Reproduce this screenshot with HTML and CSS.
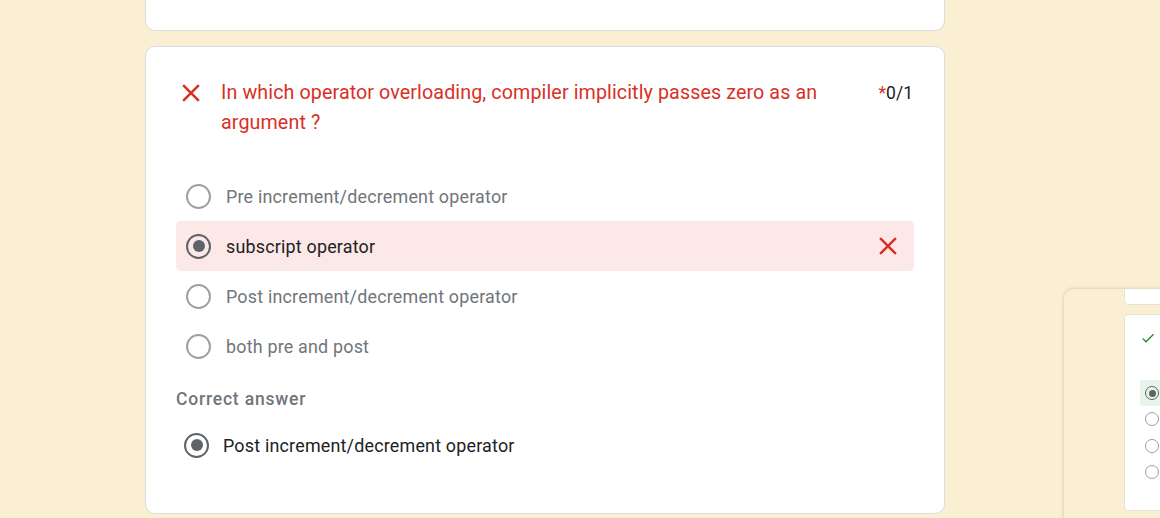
FILE: index.html
```html
<!DOCTYPE html>
<html lang="en">
<head>
<meta charset="utf-8">
<title>Quiz response</title>
<link rel="stylesheet" href="styles.css">
</head>
<body>
<div class="page">
  <div class="column">
    <div class="card card-prev"></div>
    <div class="card question">
      <div class="q-head">
        <span class="q-icon">
          <svg viewBox="0 0 24 24" width="30" height="30"><path d="M19 6.41L17.59 5 12 10.59 6.41 5 5 6.41 10.59 12 5 17.59 6.41 19 12 13.41 17.59 19 19 17.59 13.41 12z" fill="#d93025"/></svg>
        </span>
        <div class="q-title">In which operator overloading, compiler implicitly passes zero as an argument ?</div>
        <div class="q-points"><span class="req">*</span>0/1</div>
      </div>
      <div class="options">
        <div class="opt"><span class="radio"></span><span class="opt-text">Pre increment/decrement operator</span></div>
        <div class="opt opt-wrong"><span class="radio checked"></span><span class="opt-text">subscript operator</span>
          <span class="opt-mark"><svg viewBox="0 0 24 24" width="30" height="30"><path d="M19 6.41L17.59 5 12 10.59 6.41 5 5 6.41 10.59 12 5 17.59 6.41 19 12 13.41 17.59 19 19 17.59 13.41 12z" fill="#d93025"/></svg></span>
        </div>
        <div class="opt"><span class="radio"></span><span class="opt-text">Post increment/decrement operator</span></div>
        <div class="opt"><span class="radio"></span><span class="opt-text">both pre and post</span></div>
      </div>
      <div class="correct-label">Correct answer</div>
      <div class="correct-row"><span class="radio checked"></span><span class="correct-text">Post increment/decrement operator</span></div>
    </div>
  </div>
</div>
<div class="preview">
  <div class="pv-card pv-top"></div>
  <div class="pv-card pv-main">
    <svg class="pv-check" viewBox="0 0 24 24" width="16" height="16"><path d="M9 16.17L4.83 12l-1.42 1.41L9 19 21 7l-1.41-1.41z" fill="#1e8e3e"/></svg>
    <div class="pv-opts">
      <div class="pv-opt pv-sel"><span class="pv-radio on"></span></div>
      <div class="pv-opt"><span class="pv-radio"></span></div>
      <div class="pv-opt"><span class="pv-radio"></span></div>
      <div class="pv-opt"><span class="pv-radio"></span></div>
    </div>
  </div>
</div>
</body>
</html>
```

FILE: styles.css
```css
* { box-sizing: border-box; }
html, body {
  margin: 0;
  height: 518px;
  overflow: hidden;
}
body {
  background: #faefd2;
  font-family: Roboto, "Liberation Sans", Arial, sans-serif;
  color: #202124;
  position: relative;
}
.page {
  display: flex;
  padding-left: 145px;
}
.column {
  width: 800px;
  display: flex;
  flex-direction: column;
  gap: 15px;
}
.card {
  background: #fff;
  border: 1px solid #dadce0;
  border-radius: 10px;
}
.card-prev {
  height: 31px;
  border-top: none;
  border-top-left-radius: 0;
  border-top-right-radius: 0;
}
.question {
  padding: 31px 30px 43px 30px;
}
.q-head {
  display: flex;
  align-items: flex-start;
}
.q-icon {
  width: 30px;
  height: 30px;
  flex: none;
  margin-right: 15px;
  display: flex;
}
.q-title {
  flex: 1;
  color: #d93025;
  font-size: 19.7px;
  line-height: 30px;
  letter-spacing: 0.1px;
  padding-right: 30px;
}
.q-points {
  flex: none;
  font-size: 17.5px;
  line-height: 30px;
  color: #202124;
  margin-right: 1px;
}
.req { color: #d93025; }
.options {
  margin-top: 33px;
  display: flex;
  flex-direction: column;
}
.opt {
  height: 50px;
  display: flex;
  align-items: center;
  padding: 0 11px 0 10px;
  border-radius: 5px;
}
.opt-wrong { background: #fce8e6; }
.opt-text {
  margin-left: 15px;
  font-size: 17.9px;
  color: #70757a;
  letter-spacing: 0.2px;
}
.opt-wrong .opt-text { color: #202124; }
.opt-mark {
  margin-left: auto;
  width: 30px;
  height: 30px;
  display: flex;
}
.radio {
  width: 25px;
  height: 25px;
  border: 2.5px solid #9aa0a6;
  border-radius: 50%;
  flex: none;
  display: flex;
  align-items: center;
  justify-content: center;
}
.radio.checked { border-color: #5f6368; }
.radio.checked::after {
  content: "";
  width: 12px;
  height: 12px;
  border-radius: 50%;
  background: #5f6368;
}
.correct-label {
  margin-top: 16px;
  font-size: 17.5px;
  line-height: 24px;
  font-weight: 500;
  color: #70757a;
  letter-spacing: 0.8px;
}
.correct-row {
  height: 50px;
  margin-top: 9px;
  display: flex;
  align-items: center;
  padding-left: 8px;
}
.correct-text {
  margin-left: 14px;
  font-size: 17.9px;
  color: #202124;
  letter-spacing: 0.2px;
}
.preview {
  position: absolute;
  left: 1064px;
  top: 289px;
  width: 140px;
  height: 240px;
  background: #faefd2;
  border-radius: 10px 0 0 0;
  box-shadow: 0 0 4px rgba(0,0,0,0.18);
  padding-left: 60px;
  display: flex;
  flex-direction: column;
  gap: 9px;
  overflow: hidden;
}
.pv-card {
  background: #fff;
  border: 1px solid #e6e2d6;
  border-radius: 5px;
}
.pv-top {
  height: 16px;
  border-top: none;
  border-top-left-radius: 0;
  border-top-right-radius: 0;
}
.pv-main {
  height: 197px;
  padding: 15px 0 0 15px;
  border-right: none;
  border-top-right-radius: 0;
  border-bottom-right-radius: 0;
}
.pv-check { display: block; }
.pv-opts {
  margin-top: 34px;
  display: flex;
  flex-direction: column;
}
.pv-opt {
  height: 26.3px;
  display: flex;
  align-items: center;
  padding-left: 5px;
}
.pv-sel {
  background: #e6f4ea;
  border-radius: 3px 0 0 3px;
}
.pv-radio {
  width: 14px;
  height: 14px;
  border: 1.3px solid #9aa0a6;
  border-radius: 50%;
  display: flex;
  align-items: center;
  justify-content: center;
}
.pv-radio.on { border-color: #5f6368; }
.pv-radio.on::after {
  content: "";
  width: 7px;
  height: 7px;
  border-radius: 50%;
  background: #5f6368;
}
```
